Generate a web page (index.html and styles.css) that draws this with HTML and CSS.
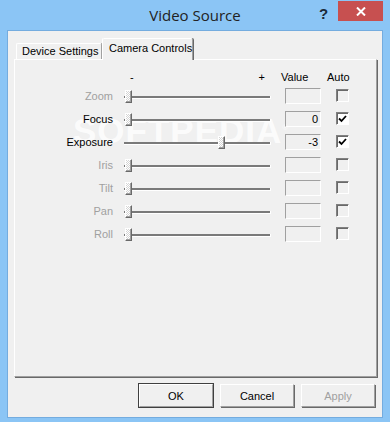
FILE: index.html
```html
<!DOCTYPE html>
<html lang="en">
<head>
    <meta charset="UTF-8">
    <title>Video Source</title>
    <link rel="stylesheet" href="styles.css">
</head>
<body>

    <div class="window">
        <!-- Title bar -->
        <div class="titlebar">
            <div class="title-spacer"></div>
            <div class="title">Video Source</div>
            <div class="title-btns">
                <div class="help">?</div>
                <div class="close">
                    <svg width="10" height="9" viewBox="0 0 10 9">
                        <path d="M1 0.5 L9 8.5 M9 0.5 L1 8.5" stroke="#fff" stroke-width="2"/>
                    </svg>
                </div>
            </div>
        </div>

        <div class="client">
            <!-- Tabs -->
            <div class="tabs">
                <div class="tab">Device Settings</div>
                <div class="tab active">Camera Controls</div>
            </div>

            <div class="panel">
                <div class="row header">
                    <div class="label"></div>
                    <div class="h-slider"><span>-</span><span>+</span></div>
                    <div class="h-value">Value</div>
                    <div class="h-auto">Auto</div>
                </div>

                <div class="row disabled">
                    <div class="label">Zoom</div>
                    <div class="slider"><div class="track"></div><div class="thumb" style="left: 1px"></div></div>
                    <div class="value"></div>
                    <div class="check"></div>
                </div>
                <div class="row">
                    <div class="label">Focus</div>
                    <div class="slider"><div class="track"></div><div class="thumb" style="left: 1px"></div></div>
                    <div class="value">0</div>
                    <div class="check checked">
                        <svg width="9" height="8" viewBox="0 0 9 8"><path d="M1 3.5 L3.5 6 L8 1" stroke="#000" stroke-width="1.8" fill="none"/></svg>
                    </div>
                </div>
                <div class="row">
                    <div class="label">Exposure</div>
                    <div class="slider"><div class="track"></div><div class="thumb" style="left: 94px"></div></div>
                    <div class="value">-3</div>
                    <div class="check checked">
                        <svg width="9" height="8" viewBox="0 0 9 8"><path d="M1 3.5 L3.5 6 L8 1" stroke="#000" stroke-width="1.8" fill="none"/></svg>
                    </div>
                </div>
                <div class="row disabled">
                    <div class="label">Iris</div>
                    <div class="slider"><div class="track"></div><div class="thumb" style="left: 1px"></div></div>
                    <div class="value"></div>
                    <div class="check"></div>
                </div>
                <div class="row disabled">
                    <div class="label">Tilt</div>
                    <div class="slider"><div class="track"></div><div class="thumb" style="left: 1px"></div></div>
                    <div class="value"></div>
                    <div class="check"></div>
                </div>
                <div class="row disabled">
                    <div class="label">Pan</div>
                    <div class="slider"><div class="track"></div><div class="thumb" style="left: 1px"></div></div>
                    <div class="value"></div>
                    <div class="check"></div>
                </div>
                <div class="row disabled">
                    <div class="label">Roll</div>
                    <div class="slider"><div class="track"></div><div class="thumb" style="left: 1px"></div></div>
                    <div class="value"></div>
                    <div class="check"></div>
                </div>

                <div class="watermark">SOFTPEDIA<sup>®</sup></div>
            </div>

            <!-- Dialog buttons -->
            <div class="buttons">
                <button class="btn default">OK</button>
                <button class="btn">Cancel</button>
                <button class="btn off">Apply</button>
            </div>
        </div>
    </div>

</body>
</html>
```

FILE: styles.css
```css
* {
    margin: 0;
    padding: 0;
    box-sizing: border-box;
}
body {
    background: #8bc5f5;
    font-family: "Liberation Sans", Arial, sans-serif;
    font-size: 11px;
    color: #000;
}
.window {
    width: 390px;
    height: 422px;
    background: #8bc5f5;
    overflow: hidden;
}

/* Title bar */
.titlebar {
    height: 31px;
    display: flex;
}
.title-spacer {
    width: 74px;
}
.title {
    flex: 1;
    text-align: center;
    font-family: "Open Sans", sans-serif;
    font-size: 15px;
    line-height: 31px;
    color: #222;
}
.title-btns {
    width: 74px;
    display: flex;
    align-items: flex-start;
}
.help {
    width: 22px;
    padding-top: 5px;
    padding-left: 3px;
    font-size: 15px;
    font-weight: bold;
    color: #1a2a3a;
}
.close {
    margin-top: 1px;
    width: 45px;
    height: 20px;
    background: #c75050;
    display: flex;
    justify-content: center;
    align-items: center;
}

/* Client area */
.client {
    margin-left: 8px;
    width: 374px;
    height: 386px;
    background: #f0f0f0;
    box-shadow: 0 0 0 1px #74acdf;
    padding: 7px 7px 0 6px;
}

/* Tabs */
.tabs {
    height: 21px;
    display: flex;
    align-items: flex-end;
    padding-left: 2px;
}
.tab {
    width: 86px;
    height: 16px;
    line-height: 15px;
    padding-left: 5px;
    white-space: nowrap;
    border-top: 1px solid #fff;
    border-left: 1px solid #fff;
    border-right: 1px solid #a0a0a0;
    border-radius: 2px 2px 0 0;
    box-shadow: 1px 0 0 #696969;
}
.tab.active {
    width: 91px;
    height: 22px;
    margin-bottom: -1px;
    line-height: 18px;
    padding-left: 6px;
    background: #f0f0f0;
    position: relative;
    z-index: 1;
}

.panel {
    position: relative;
    width: 363px;
    height: 318px;
    border-top: 1px solid #fff;
    border-left: 1px solid #fff;
    border-right: 1px solid #a0a0a0;
    border-bottom: 1px solid #a0a0a0;
    box-shadow: 1px 1px 0 #696969;
    padding-top: 10px;
}

/* Control rows */
.row {
    height: 23px;
    display: flex;
    align-items: center;
    position: relative;
    z-index: 1;
}
.row.header {
    height: 14px;
}
.label {
    width: 98px;
    margin-right: 11px;
    text-align: right;
}
.h-slider {
    width: 147px;
    margin-right: 10px;
    display: flex;
    justify-content: space-between;
    padding: 0 6px 0 6px;
}
.h-value {
    width: 46px;
}
.slider {
    width: 147px;
    height: 23px;
    margin-right: 14px;
    position: relative;
}
.track {
    position: absolute;
    left: 0;
    right: 0;
    top: 12px;
    height: 3px;
    background: #7a7a7a;
    border-bottom: 1px solid #fff;
    border-right: 1px solid #fff;
}
.thumb {
    position: absolute;
    top: 6px;
    width: 7px;
    height: 13px;
    border-top: 1px solid #fff;
    border-left: 1px solid #fff;
    border-right: 1px solid #696969;
    border-bottom: 1px solid #696969;
    box-shadow: inset -1px -1px 0 #a0a0a0;
    background: repeating-conic-gradient(#fff 0 25%, #d4d4d4 0 50%) 0 0 / 2px 2px;
}
.value {
    width: 36px;
    height: 16px;
    margin-right: 15px;
    border-top: 1px solid #a0a0a0;
    border-left: 1px solid #a0a0a0;
    border-right: 1px solid #fff;
    border-bottom: 1px solid #fff;
    text-align: right;
    padding-right: 2px;
    line-height: 14px;
}
.check {
    width: 13px;
    height: 13px;
    border-top: 1px solid #808080;
    border-left: 1px solid #808080;
    border-right: 1px solid #fff;
    border-bottom: 1px solid #fff;
    box-shadow: inset 1px 1px 0 #696969;
    background: #f0f0f0;
    display: flex;
    justify-content: center;
    align-items: center;
}
.check.checked {
    background: #fff;
}
.disabled .label {
    color: #a0a0a0;
}

.watermark {
    position: absolute;
    left: 58px;
    top: 51px;
    font-size: 35px;
    font-weight: bold;
    letter-spacing: 1px;
    color: rgba(255, 255, 255, 0.8);
}
.watermark sup {
    font-size: 8px;
    font-weight: normal;
}

/* Buttons */
.buttons {
    display: flex;
    justify-content: flex-end;
    gap: 7px;
    margin-top: 7px;
}
.btn {
    width: 74px;
    height: 23px;
    font-family: "Liberation Sans", Arial, sans-serif;
    font-size: 11px;
    background: #f0f0f0;
    border-top: 1px solid #fff;
    border-left: 1px solid #fff;
    border-right: 1px solid #a0a0a0;
    border-bottom: 1px solid #a0a0a0;
    box-shadow: 1px 1px 0 #696969;
    color: #000;
}
.btn.default {
    outline: 1px solid #404040;
}
.btn.off {
    color: #a0a0a0;
}
```
